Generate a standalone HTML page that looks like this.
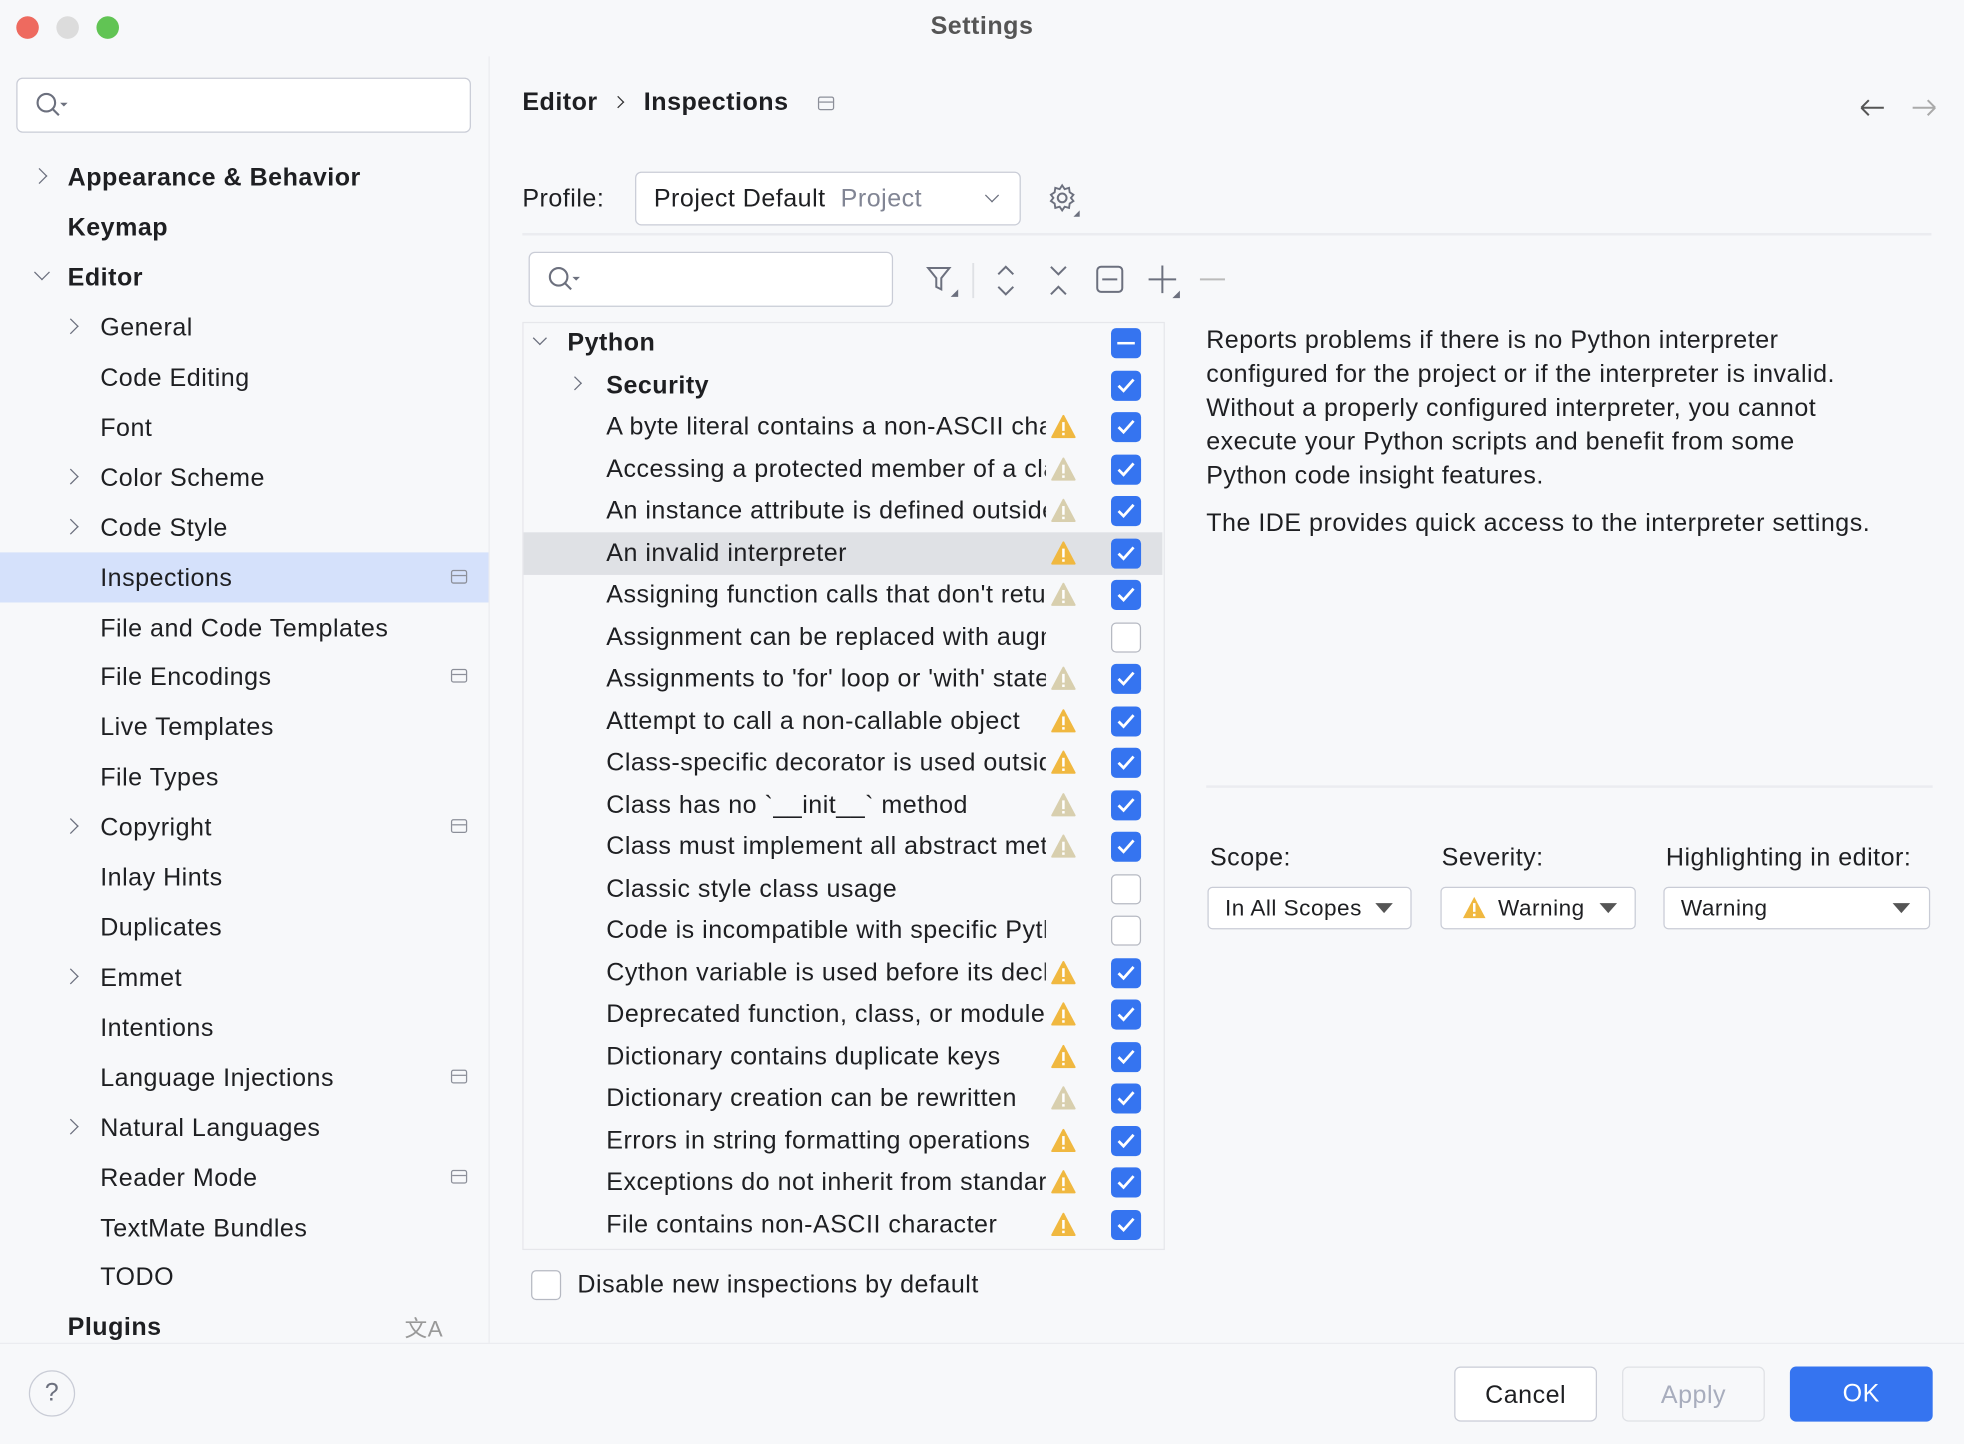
<!DOCTYPE html>
<html><head><meta charset="utf-8">
<style>
*{box-sizing:border-box;margin:0;padding:0}
html,body{width:1964px;height:1444px;overflow:hidden;background:#f7f8fa}
#w{position:absolute;left:0;top:0;width:1568px;height:1153px;transform:scale(1.25255);transform-origin:0 0;background:#f7f8fa;font-family:"Liberation Sans",sans-serif;color:#1e1f22;font-size:20px;letter-spacing:0.4px}
.a{position:absolute}
.tl{position:absolute;top:13px;width:18px;height:18px;border-radius:50%}
.row{position:absolute;height:40px;line-height:42px;white-space:nowrap}
.chev{position:absolute;width:9px;height:9px;border-right:1.6px solid #6c707e;border-bottom:1.6px solid #6c707e}
.r{transform:rotate(-45deg)}
.d{transform:rotate(45deg)}
.box{position:absolute;background:#fff;border:1.5px solid #c9ccd6;border-radius:5px}
.pin{position:absolute;width:13px;height:11px;border:1.4px solid #8c8f99;border-radius:2px}
.pin:after{content:"";position:absolute;left:0;right:0;top:3px;border-top:1.4px solid #8c8f99}
.it{position:absolute;left:0;width:510px;height:33.5px;line-height:35px}
.it .t{position:absolute;left:67px;width:351px;overflow:hidden;white-space:nowrap}
.cb{position:absolute;left:470px;top:5px;width:24px;height:24px;border-radius:4px;background:#3574f0}
.cb.u{background:#fff;border:1.5px solid #b6b9c2}
.cb svg{position:absolute;left:3px;top:3px}
.wn{position:absolute;left:422px;top:7px}
.btn{position:absolute;top:1091px;width:114px;height:44px;border-radius:5px;text-align:center;line-height:44px;font-size:20px}
.cmb{position:absolute;top:708px;height:34px;background:#fff;border:1.5px solid #c9ccd6;border-radius:4px;font-size:18px;line-height:33px;padding-left:13px}
.tri{position:absolute;top:12px;width:0;height:0;border-left:7px solid transparent;border-right:7px solid transparent;border-top:8px solid #555}
</style></head><body><div id="w">
<div class="tl" style="left:13px;background:#ee6a5f"></div>
<div class="tl" style="left:45px;background:#dcdcdc"></div>
<div class="tl" style="left:77px;background:#61c454"></div>
<div class="a" style="left:0;width:1568px;top:10px;text-align:center;font-weight:bold;color:#555;font-size:20px">Settings</div>
<div class="a" style="left:390px;top:45px;width:1px;height:1027px;background:#ebecf0"></div>
<div class="a" style="left:0;top:1072px;width:1568px;height:1px;background:#ebecf0"></div>

<div class="box" style="left:13px;top:62px;width:363px;height:44px"></div>
<svg class="a" style="left:27px;top:73px" width="30" height="22"><circle cx="10" cy="9" r="7" fill="none" stroke="#6c707e" stroke-width="1.7"/><line x1="15" y1="14" x2="20" y2="19" stroke="#6c707e" stroke-width="1.7"/><path d="M21 9h6l-3 3z" fill="#6c707e"/></svg>

<div class="a" style="left:0;top:441px;width:390px;height:40px;background:#d5e1fb"></div>
<div class="chev r" style="left:27px;top:136px"></div>
<div class="row" style="left:54px;top:121px;font-weight:bold">Appearance &amp; Behavior</div>
<div class="row" style="left:54px;top:161px;font-weight:bold">Keymap</div>
<div class="chev d" style="left:29px;top:213px"></div>
<div class="row" style="left:54px;top:201px;font-weight:bold">Editor</div>
<div class="chev r" style="left:52px;top:256px"></div><div class="row" style="left:80px;top:241px">General</div>
<div class="row" style="left:80px;top:281px">Code Editing</div>
<div class="row" style="left:80px;top:321px">Font</div>
<div class="chev r" style="left:52px;top:376px"></div><div class="row" style="left:80px;top:361px">Color Scheme</div>
<div class="chev r" style="left:52px;top:416px"></div><div class="row" style="left:80px;top:401px">Code Style</div>
<div class="row" style="left:80px;top:441px">Inspections</div><div class="pin" style="left:360px;top:455px"></div>
<div class="row" style="left:80px;top:481px">File and Code Templates</div>
<div class="row" style="left:80px;top:520px">File Encodings</div><div class="pin" style="left:360px;top:534px"></div>
<div class="row" style="left:80px;top:560px">Live Templates</div>
<div class="row" style="left:80px;top:600px">File Types</div>
<div class="chev r" style="left:52px;top:655px"></div><div class="row" style="left:80px;top:640px">Copyright</div><div class="pin" style="left:360px;top:654px"></div>
<div class="row" style="left:80px;top:680px">Inlay Hints</div>
<div class="row" style="left:80px;top:720px">Duplicates</div>
<div class="chev r" style="left:52px;top:775px"></div><div class="row" style="left:80px;top:760px">Emmet</div>
<div class="row" style="left:80px;top:800px">Intentions</div>
<div class="row" style="left:80px;top:840px">Language Injections</div><div class="pin" style="left:360px;top:854px"></div>
<div class="chev r" style="left:52px;top:895px"></div><div class="row" style="left:80px;top:880px">Natural Languages</div>
<div class="row" style="left:80px;top:920px">Reader Mode</div><div class="pin" style="left:360px;top:934px"></div>
<div class="row" style="left:80px;top:960px">TextMate Bundles</div>
<div class="row" style="left:80px;top:999px">TODO</div>
<div class="row" style="left:54px;top:1039px;font-weight:bold">Plugins</div>
<div class="a" style="left:323px;top:1047px;color:#999;font-size:18px">文A</div>

<div class="a" style="left:417px;top:71px;font-weight:bold">Editor</div>
<div class="chev r" style="left:490px;top:78px;width:7px;height:7px;border-color:#333"></div>
<div class="a" style="left:514px;top:71px;font-weight:bold">Inspections</div>
<div class="pin" style="left:653px;top:77px"></div>
<svg class="a" style="left:1483px;top:77px" width="70" height="18"><path d="M3 9h18M3 9l6-6M3 9l6 6" stroke="#555" stroke-width="1.6" fill="none"/><path d="M44 9h18M62 9l-6-6M62 9l-6 6" stroke="#aaa" stroke-width="1.6" fill="none"/></svg>

<div class="a" style="left:417px;top:148px">Profile:</div>
<div class="box" style="left:507px;top:137px;width:308px;height:43px"></div>
<div class="a" style="left:522px;top:148px">Project Default <span style="color:#818594;margin-left:6px">Project</span></div>
<div class="chev d" style="left:788px;top:152px;width:8px;height:8px"></div>
<svg class="a" style="left:836px;top:146px" width="28" height="28"><circle cx="12" cy="12" r="3.5" fill="none" stroke="#6c707e" stroke-width="1.6"/><path d="M12 2l2 3 3.5-1 .5 3.5 3 2-2 2.5 2 2.5-3 2-.5 3.5-3.5-1-2 3-2-3-3.5 1-.5-3.5-3-2 2-2.5-2-2.5 3-2 .5-3.5 3.5 1z" fill="none" stroke="#6c707e" stroke-width="1.5"/><path d="M26 22v5h-5z" fill="#6c707e"/></svg>
<div class="a" style="left:417px;top:186px;width:1125px;height:2px;background:#ebecf0"></div>

<div class="box" style="left:422px;top:201px;width:291px;height:44px"></div>
<svg class="a" style="left:436px;top:212px" width="30" height="22"><circle cx="10" cy="9" r="7" fill="none" stroke="#6c707e" stroke-width="1.7"/><line x1="15" y1="14" x2="20" y2="19" stroke="#6c707e" stroke-width="1.7"/><path d="M21 9h6l-3 3z" fill="#6c707e"/></svg>
<svg class="a" style="left:738px;top:210px" width="240" height="30"><path d="M3 4h17l-6.5 8v9l-4-2v-7z" fill="none" stroke="#6c707e" stroke-width="1.6"/><path d="M27 21v6h-6z" fill="#6c707e"/>
<line x1="39" y1="0" x2="39" y2="28" stroke="#dfe1e5" stroke-width="1.5"/>
<path d="M59 9l6-6 6 6M59 19l6 6 6-6" fill="none" stroke="#6c707e" stroke-width="1.6"/>
<path d="M101 3l6 6 6-6M101 25l6-6 6 6" fill="none" stroke="#6c707e" stroke-width="1.6"/>
<rect x="138" y="3" width="20" height="20" rx="3" fill="none" stroke="#6c707e" stroke-width="1.6"/><line x1="142" y1="13" x2="154" y2="13" stroke="#6c707e" stroke-width="1.6"/>
<path d="M190 2v22M179 13h22" stroke="#6c707e" stroke-width="1.6"/><path d="M204 22v6h-6z" fill="#6c707e"/>
<line x1="220" y1="13" x2="240" y2="13" stroke="#bbb" stroke-width="1.6"/></svg>

<div class="a" style="left:417px;top:257px;width:513px;height:741px;border:1px solid #e6e7eb"></div>
<div class="a" style="left:417px;top:257px;width:512px">
<div class="a" style="left:1px;top:168px;width:510px;height:33.5px;background:#dfe1e5"></div>
<div class="chev d" style="left:10px;top:9px;width:8px;height:8px"></div>
<div class="it" style="top:0"><span class="a" style="left:36px;font-weight:bold">Python</span><div class="cb"><div class="a" style="left:5px;top:10.5px;width:14px;height:2.5px;background:#fff"></div></div></div>
<div class="chev r" style="left:38px;top:45px;width:8px;height:8px"></div>
<div class="it" style="top:33.5px"><span class="a" style="left:67px;font-weight:bold">Security</span><div class="cb"><svg width="18" height="18"><path d="M3 9l4 4 8-9" fill="none" stroke="#fff" stroke-width="2.2"/></svg></div></div>
</div>
<div id="list" class="a" style="left:417px;top:324px;width:512px"></div>

<div class="a" style="left:963px;top:259px;width:600px;line-height:27px;font-size:20px;white-space:nowrap">Reports problems if there is no Python interpreter<br>configured for the project or if the interpreter is invalid.<br>Without a properly configured interpreter, you cannot<br>execute your Python scripts and benefit from some<br>Python code insight features.<div style="margin-top:11px">The IDE provides quick access to the interpreter settings.</div></div>
<div class="a" style="left:963px;top:627px;width:580px;height:2px;background:#ebecf0"></div>
<div class="a" style="left:966px;top:674px">Scope:</div>
<div class="a" style="left:1151px;top:674px">Severity:</div>
<div class="a" style="left:1330px;top:674px">Highlighting in editor:</div>
<div class="cmb" style="left:964px;width:163px">In All Scopes<div class="tri" style="left:133px"></div></div>
<div class="cmb" style="left:1150px;width:156px;padding-left:45px">Warning<svg class="a" style="left:16px;top:6px" width="20" height="19"><path d="M10 1l9 17H1z" fill="#f0b840"/><rect x="9" y="6" width="2" height="7" fill="#fff"/><rect x="9" y="14.5" width="2" height="2" fill="#fff"/></svg><div class="tri" style="left:126px"></div></div>
<div class="cmb" style="left:1328px;width:213px">Warning<div class="tri" style="left:182px"></div></div>

<div class="a" style="left:424px;top:1014px;width:24px;height:24px;border:1.5px solid #b6b9c2;border-radius:4px;background:#fff"></div>
<div class="a" style="left:461px;top:1015px">Disable new inspections by default</div>

<div class="a" style="left:23px;top:1094px;width:37px;height:37px;border:1.5px solid #c9ccd6;border-radius:50%;text-align:center;line-height:34px;color:#6c707e;font-size:20px">?</div>
<div class="btn" style="left:1161px;background:#fff;border:1.5px solid #c9ccd6">Cancel</div>
<div class="btn" style="left:1295px;border:1.5px solid #dfe1e5;color:#a8adbd">Apply</div>
<div class="btn" style="left:1429px;background:#3574f0;color:#fff">OK</div>
</div>
<script>
var Y='#f0b840',G='#d8cfae';
var items=[["A byte literal contains a non-ASCII character",Y,1],["Accessing a protected member of a class",G,1],["An instance attribute is defined outside __init__",G,1],["An invalid interpreter",Y,1],["Assigning function calls that don't return anything",G,1],["Assignment can be replaced with augmented assignment",0,0],["Assignments to 'for' loop or 'with' statement",G,1],["Attempt to call a non-callable object",Y,1],["Class-specific decorator is used outside class",Y,1],["Class has no `__init__` method",G,1],["Class must implement all abstract methods",G,1],["Classic style class usage",0,0],["Code is incompatible with specific Python versions",0,0],["Cython variable is used before its declaration",Y,1],["Deprecated function, class, or module",Y,1],["Dictionary contains duplicate keys",Y,1],["Dictionary creation can be rewritten",G,1],["Errors in string formatting operations",Y,1],["Exceptions do not inherit from standard",Y,1],["File contains non-ASCII character",Y,1]];
var h='';
items.forEach(function(it,i){
h+='<div class="it" style="top:'+(i*33.5)+'px"><span class="t">'+it[0].replace(/</g,'&lt;')+'</span>';
if(it[1])h+='<svg class="wn" width="20" height="19"><path d="M10 1l9 17H1z" fill="'+it[1]+'" stroke="'+it[1]+'" stroke-linejoin="round" stroke-width="1.5"/><rect x="9" y="6" width="2" height="7" fill="#fff"/><rect x="9" y="14.5" width="2" height="2" fill="#fff"/></svg>';
h+=it[2]?'<div class="cb"><svg width="18" height="18"><path d="M3 9l4 4 8-9" fill="none" stroke="#fff" stroke-width="2.2"/></svg></div>':'<div class="cb u"></div>';
h+='</div>';});
document.getElementById('list').innerHTML=h;
</script>
</body></html>
